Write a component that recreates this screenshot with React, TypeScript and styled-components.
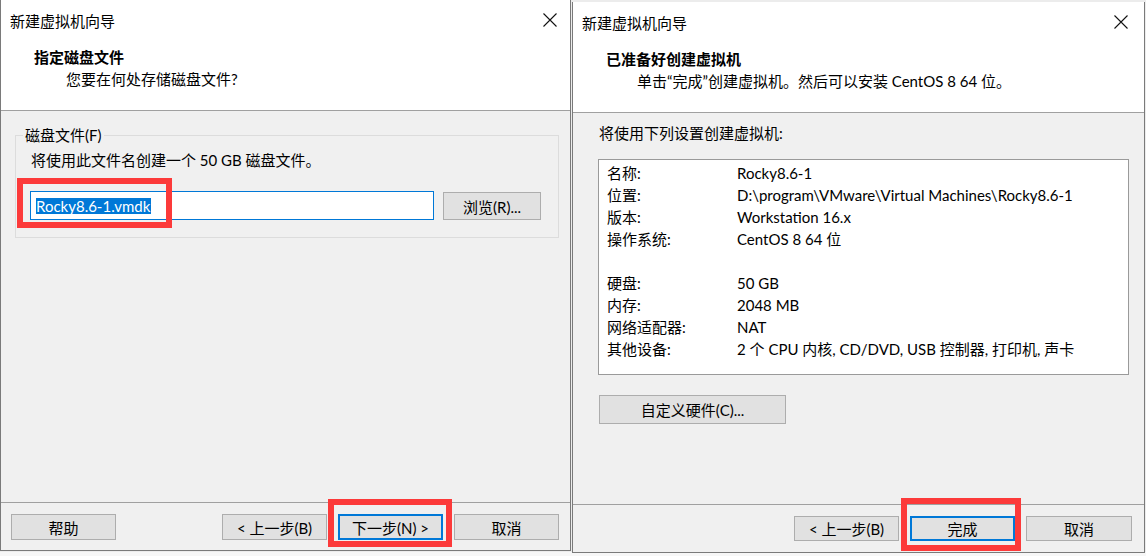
import React from 'react';
import styled, { createGlobalStyle } from 'styled-components';

const GlobalStyle = createGlobalStyle`
  html, body {
    margin: 0;
    padding: 0;
  }
  body {
    width: 1146px;
    height: 556px;
    overflow: hidden;
    background: #ececec;
    font-family: Lato, "Noto Sans CJK SC", sans-serif;
    font-size: 15px;
    color: #000;
  }
`;

const Desktop = styled.div`
  display: flex;
  align-items: flex-start;
  gap: 1px;
  width: 1146px;
  height: 556px;
  background: linear-gradient(#ececec 0 552px, #f7f7f7 552px);
`;

const Dialog = styled.div<{ $width: number; $top: number }>`
  position: relative;
  box-sizing: border-box;
  width: ${(p) => p.$width}px;
  height: 551px;
  margin-top: ${(p) => p.$top}px;
  display: flex;
  flex-direction: column;
  background: #f0f0f0;
  border: 1px solid #7a7a7a;
  border-top: none;
`;

const Header = styled.div`
  box-sizing: border-box;
  height: 111px;
  background: #fff;
  border-bottom: 1px solid #a0a0a0;
`;

const TitleBar = styled.div<{ $closeGap: number }>`
  display: flex;
  align-items: center;
  justify-content: space-between;
  height: 40px;
  padding: 0 ${(p) => p.$closeGap}px 0 9px;
  font-size: 15px;
`;

const CloseIcon = styled.svg`
  width: 14px;
  height: 14px;
  display: block;
`;

const Heading = styled.div<{ $indent: number }>`
  margin-top: 6px;
  padding-left: ${(p) => p.$indent}px;
  line-height: 22px;
  font-weight: bold;
  font-size: 15px;
`;

const SubHeading = styled.div<{ $indent: number }>`
  padding-left: ${(p) => p.$indent}px;
  line-height: 22px;
`;

const Body = styled.div<{ $pad: string }>`
  flex: 1;
  display: flex;
  flex-direction: column;
  align-items: flex-start;
  padding: ${(p) => p.$pad};
`;

const GroupBox = styled.fieldset`
  align-self: stretch;
  margin: 0;
  padding: 0 16px 17px 14px;
  border: 1px solid #dcdcdc;
  min-width: 0;
`;

const Legend = styled.legend`
  padding: 0 2px;
  margin-left: -7px;
  line-height: 20px;
`;

const Text = styled.div`
  line-height: 22px;
  padding-left: 1px;
`;

const InputRow = styled.div`
  display: flex;
  align-items: flex-start;
  gap: 9px;
  margin-top: 20px;
`;

const TextInput = styled.div`
  box-sizing: border-box;
  width: 404px;
  height: 29px;
  display: flex;
  align-items: center;
  padding-left: 5px;
  background: #fff;
  border: 1px solid #0078d7;
`;

const Selection = styled.span`
  background: #0078d7;
  color: #fff;
  line-height: 16px;
  height: 16px;
  padding-right: 1px;
`;

const Button = styled.div<{ $w: number; $h?: number; $default?: boolean }>`
  box-sizing: border-box;
  width: ${(p) => p.$w}px;
  height: ${(p) => p.$h ?? 26}px;
  display: flex;
  align-items: center;
  justify-content: center;
  background: #e1e1e1;
  border: ${(p) => (p.$default ? '2px solid #0078d7' : '1px solid #adadad')};
  font-size: 15px;
  white-space: pre;
`;

const SummaryBox = styled.div`
  box-sizing: border-box;
  align-self: stretch;
  height: 216px;
  margin-top: 15px;
  padding: 2px 8px;
  background: #fff;
  border: 1px solid #9a9a9a;
`;

const SummaryRow = styled.div`
  display: grid;
  grid-template-columns: 130px 1fr;
  height: 22px;
  line-height: 22px;
  white-space: nowrap;
`;

const Footer = styled.div<{ $padRight: number }>`
  box-sizing: border-box;
  height: 48px;
  display: flex;
  align-items: flex-start;
  gap: 11px;
  padding: 11px ${(p) => p.$padRight}px 0 10px;
  border-top: 1px solid #a0a0a0;
`;

const Spacer = styled.div`
  flex: 1;
`;

const Annotation = styled.div<{ $l: number; $t: number; $w: number; $h: number }>`
  position: absolute;
  left: ${(p) => p.$l}px;
  top: ${(p) => p.$t}px;
  width: ${(p) => p.$w}px;
  height: ${(p) => p.$h}px;
  box-sizing: border-box;
  border: 6px solid #fc3a3a;
  pointer-events: none;
`;

function Close() {
  return (
    <CloseIcon viewBox="0 0 14 14">
      <path d="M0.5 0.5 L13.5 13.5 M13.5 0.5 L0.5 13.5" stroke="#111" strokeWidth="1.1" fill="none" />
    </CloseIcon>
  );
}

const summary: [string, string][] = [
  ['名称:', 'Rocky8.6-1'],
  ['位置:', 'D:\\program\\VMware\\Virtual Machines\\Rocky8.6-1'],
  ['版本:', 'Workstation 16.x'],
  ['操作系统:', 'CentOS 8 64 位'],
  ['', ''],
  ['硬盘:', '50 GB'],
  ['内存:', '2048 MB'],
  ['网络适配器:', 'NAT'],
  ['其他设备:', '2 个 CPU 内核, CD/DVD, USB 控制器, 打印机, 声卡'],
];

export default function App() {
  return (
    <>
      <GlobalStyle />
      <Desktop>
        <Dialog $width={571} $top={0}>
          <Header>
            <TitleBar $closeGap={13}>
              <span>新建虚拟机向导</span>
              <Close />
            </TitleBar>
            <Heading $indent={33}>指定磁盘文件</Heading>
            <SubHeading $indent={65}>您要在何处存储磁盘文件?</SubHeading>
          </Header>
          <Body $pad="14px 11px 0 14px">
            <GroupBox>
              <Legend>磁盘文件(F)</Legend>
              <Text style={{ marginTop: 4 }}>将使用此文件名创建一个 50 GB 磁盘文件。</Text>
              <InputRow>
                <TextInput>
                  <Selection>Rocky8.6-1.vmdk</Selection>
                </TextInput>
                <Button $w={98} $h={28} style={{ marginTop: 1 }}>浏览(R)...</Button>
              </InputRow>
            </GroupBox>
          </Body>
          <Footer $padRight={11}>
            <Button $w={105}>帮助</Button>
            <Spacer />
            <Button $w={105}>{'< 上一步(B)'}</Button>
            <Button $w={105} $default>{'下一步(N) >'}</Button>
            <Button $w={105}>取消</Button>
          </Footer>
          <Annotation $l={16} $t={178} $w={155} $h={50} />
          <Annotation $l={327} $t={499} $w={124} $h={48} />
        </Dialog>
        <Dialog $width={573} $top={2}>
          <Header>
            <TitleBar $closeGap={16}>
              <span>新建虚拟机向导</span>
              <Close />
            </TitleBar>
            <Heading $indent={33}>已准备好创建虚拟机</Heading>
            <SubHeading $indent={64}>单击“完成”创建虚拟机。然后可以安装 CentOS 8 64 位。</SubHeading>
          </Header>
          <Body $pad="9px 15px 0 25px">
            <Text>将使用下列设置创建虚拟机:</Text>
            <SummaryBox>
              {summary.map(([k, v], i) => (
                <SummaryRow key={i}>
                  <span>{k}</span>
                  <span>{v}</span>
                </SummaryRow>
              ))}
            </SummaryBox>
            <Button $w={187} $h={29} style={{ marginTop: 20, marginLeft: 1 }}>自定义硬件(C)...</Button>
          </Body>
          <Footer $padRight={12}>
            <Spacer />
            <Button $w={105} $h={25}>{'< 上一步(B)'}</Button>
            <Button $w={105} $h={25} $default>完成</Button>
            <Button $w={106} $h={25}>取消</Button>
          </Footer>
          <Annotation $l={328} $t={496} $w={120} $h={53} />
        </Dialog>
      </Desktop>
    </>
  );
}
